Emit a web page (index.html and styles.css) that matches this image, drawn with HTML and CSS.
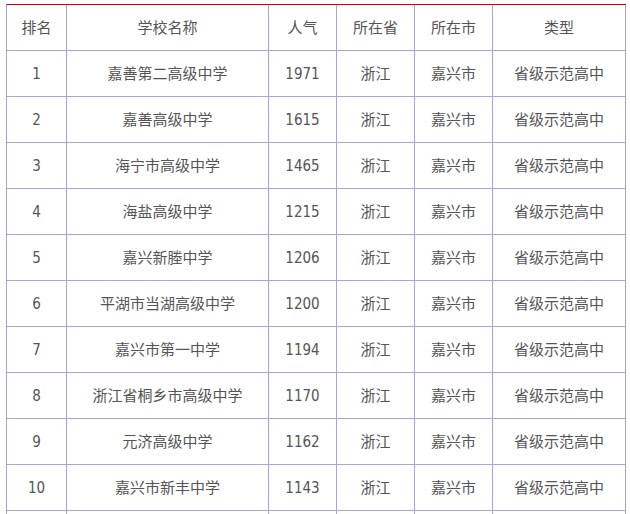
FILE: index.html
```html
<!DOCTYPE html>
<html lang="zh">
<head>
<meta charset="utf-8">
<title>嘉兴高中排名</title>
<link rel="stylesheet" href="styles.css">
</head>
<body>
<div class="rank" role="table">
  <div class="row head" role="row">
    <div class="cell" role="columnheader">排名</div>
    <div class="cell" role="columnheader">学校名称</div>
    <div class="cell" role="columnheader">人气</div>
    <div class="cell" role="columnheader">所在省</div>
    <div class="cell" role="columnheader">所在市</div>
    <div class="cell" role="columnheader">类型</div>
  </div>
  <div class="row" role="row"><div class="cell">1</div><div class="cell">嘉善第二高级中学</div><div class="cell">1971</div><div class="cell">浙江</div><div class="cell">嘉兴市</div><div class="cell">省级示范高中</div></div>
  <div class="row" role="row"><div class="cell">2</div><div class="cell">嘉善高级中学</div><div class="cell">1615</div><div class="cell">浙江</div><div class="cell">嘉兴市</div><div class="cell">省级示范高中</div></div>
  <div class="row" role="row"><div class="cell">3</div><div class="cell">海宁市高级中学</div><div class="cell">1465</div><div class="cell">浙江</div><div class="cell">嘉兴市</div><div class="cell">省级示范高中</div></div>
  <div class="row" role="row"><div class="cell">4</div><div class="cell">海盐高级中学</div><div class="cell">1215</div><div class="cell">浙江</div><div class="cell">嘉兴市</div><div class="cell">省级示范高中</div></div>
  <div class="row" role="row"><div class="cell">5</div><div class="cell">嘉兴新塍中学</div><div class="cell">1206</div><div class="cell">浙江</div><div class="cell">嘉兴市</div><div class="cell">省级示范高中</div></div>
  <div class="row" role="row"><div class="cell">6</div><div class="cell">平湖市当湖高级中学</div><div class="cell">1200</div><div class="cell">浙江</div><div class="cell">嘉兴市</div><div class="cell">省级示范高中</div></div>
  <div class="row" role="row"><div class="cell">7</div><div class="cell">嘉兴市第一中学</div><div class="cell">1194</div><div class="cell">浙江</div><div class="cell">嘉兴市</div><div class="cell">省级示范高中</div></div>
  <div class="row" role="row"><div class="cell">8</div><div class="cell">浙江省桐乡市高级中学</div><div class="cell">1170</div><div class="cell">浙江</div><div class="cell">嘉兴市</div><div class="cell">省级示范高中</div></div>
  <div class="row" role="row"><div class="cell">9</div><div class="cell">元济高级中学</div><div class="cell">1162</div><div class="cell">浙江</div><div class="cell">嘉兴市</div><div class="cell">省级示范高中</div></div>
  <div class="row" role="row"><div class="cell">10</div><div class="cell">嘉兴市新丰中学</div><div class="cell">1143</div><div class="cell">浙江</div><div class="cell">嘉兴市</div><div class="cell">省级示范高中</div></div>
  <div class="row cut" role="row"><div class="cell"></div><div class="cell"></div><div class="cell"></div><div class="cell"></div><div class="cell"></div><div class="cell"></div></div>
</div>
</body>
</html>
```
FILE: styles.css
```css
html, body {
  margin: 0;
  padding: 0;
  background: #ffffff;
}
body {
  height: 514px;
  padding: 4px 0 0 6px;
  box-sizing: border-box;
  overflow: hidden;
  font-family: "DejaVu Sans Condensed", "Noto Sans CJK SC", sans-serif;
}
.rank {
  width: 620px;
  box-sizing: border-box;
  border-top: 1px solid #d40000;
  border-left: 1px solid #aaa2d4;
}
.row {
  display: grid;
  grid-template-columns: 60px 202px 68px 78px 78px 133px;
  height: 46px;
}
.cell {
  box-sizing: border-box;
  border-right: 1px solid #aaa2d4;
  border-bottom: 1px solid #aaa2d4;
  display: flex;
  align-items: center;
  justify-content: center;
  font-size: 15px;
  line-height: 20px;
  color: #555555;
}
```
